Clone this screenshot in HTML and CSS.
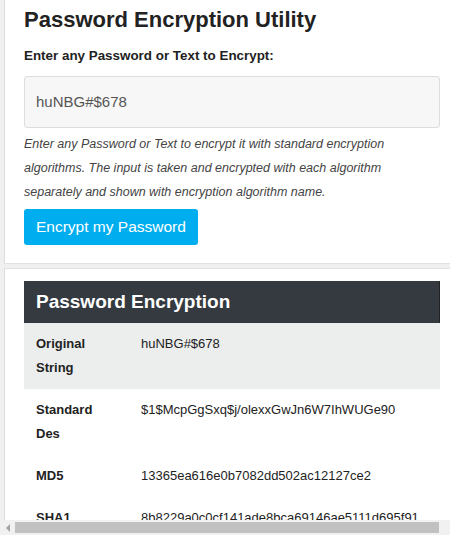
FILE: index.html
```html
<!DOCTYPE html>
<html>
<head>
<meta charset="utf-8">
<link rel="stylesheet" href="styles.css">
</head>
<body>
<div class="page">
  <section class="panel panel-top">
    <h1 class="title">Password Encryption Utility</h1>
    <label class="label">Enter any Password or Text to Encrypt:</label>
    <div class="input">huNBG#$678</div>
    <p class="help">Enter any Password or Text to encrypt it with standard encryption algorithms. The input is taken and encrypted with each algorithm separately and shown with encryption algorithm name.</p>
    <button class="btn">Encrypt my Password</button>
  </section>
  <section class="panel panel-bottom">
    <table class="tbl">
      <thead>
        <tr><th colspan="2">Password Encryption</th></tr>
      </thead>
      <tbody>
        <tr class="odd"><td class="k">Original String</td><td class="v">huNBG#$678</td></tr>
        <tr><td class="k">Standard Des</td><td class="v">$1$McpGgSxq$j/olexxGwJn6W7IhWUGe90</td></tr>
        <tr><td class="k">MD5</td><td class="v">13365ea616e0b7082dd502ac12127ce2</td></tr>
        <tr><td class="k">SHA1</td><td class="v">8b8229a0c0cf141ade8bca69146ae5111d695f91</td></tr>
      </tbody>
    </table>
  </section>
</div>
<div class="hscroll">
  <span class="arrow"></span>
  <span class="thumb"></span>
</div>
</body>
</html>
```
FILE: styles.css
```css
html, body {
  margin: 0;
  padding: 0;
  height: 100%;
  overflow: hidden;
  background: #f0f0f0;
  font-family: "Liberation Sans", Arial, sans-serif;
  color: #222;
}
.page {
  padding-left: 4px;
  width: 470px;
}
.panel {
  background: #fff;
  border-left: 1px solid #dcdcdc;
  padding: 0 0 0 19px;
}
.panel-top {
  height: 262px;
  border-bottom: 1px solid #e2e2e2;
  padding-top: 1px;
  margin-bottom: 4px;
}
.title {
  margin: 5px 0 0;
  font-size: 22px;
  line-height: 28px;
  font-weight: bold;
  color: #222;
}
.label {
  display: block;
  margin-top: 13px;
  font-size: 13.4px;
  font-weight: bold;
  line-height: 18px;
  color: #222;
}
.input {
  box-sizing: border-box;
  width: 416px;
  height: 52px;
  margin-top: 11px;
  background: #f7f7f7;
  border: 1px solid #dddddd;
  border-radius: 3px;
  padding: 0 11px;
  line-height: 50px;
  font-size: 15px;
  color: #555;
}
.help {
  margin: 4px 0 0;
  width: 400px;
  font-size: 12.5px;
  font-style: italic;
  line-height: 24px;
  color: #444;
}
.btn {
  margin-top: 5px;
  height: 36px;
  padding: 0 12px;
  background: #00aeef;
  border: 0;
  border-radius: 3px;
  color: #fff;
  font-family: "Liberation Sans", Arial, sans-serif;
  font-size: 15.5px;
  cursor: pointer;
}
.panel-bottom {
  padding-top: 12px;
  border-top: 1px solid #e2e2e2;
  height: 300px;
}
.tbl {
  width: 416px;
  border-collapse: collapse;
  font-size: 13px;
}
.tbl th {
  background: #343a40;
  color: #fff;
  text-align: left;
  font-size: 19px;
  font-weight: bold;
  height: 42px;
  padding: 0 12px;
  border-right: 1px solid #222;
}
.tbl td {
  vertical-align: top;
  padding: 9px 12px;
  line-height: 24px;
  color: #222;
}
.tbl tr.odd td {
  background: #eceeed;
}
.tbl td.k {
  width: 81px;
  font-weight: bold;
}
.tbl td.v {
  white-space: nowrap;
}
.hscroll {
  position: fixed;
  left: 0;
  right: 0;
  bottom: 0;
  height: 15px;
  background: #f1f1f1;
}
.hscroll .arrow {
  position: absolute;
  left: 6px;
  top: 4px;
  width: 0;
  height: 0;
  border-top: 4px solid transparent;
  border-bottom: 4px solid transparent;
  border-right: 4px solid #a3a3a3;
}
.hscroll .thumb {
  position: absolute;
  left: 15px;
  width: 424px;
  top: 2px;
  height: 11px;
  background: #c1c1c1;
}
```
